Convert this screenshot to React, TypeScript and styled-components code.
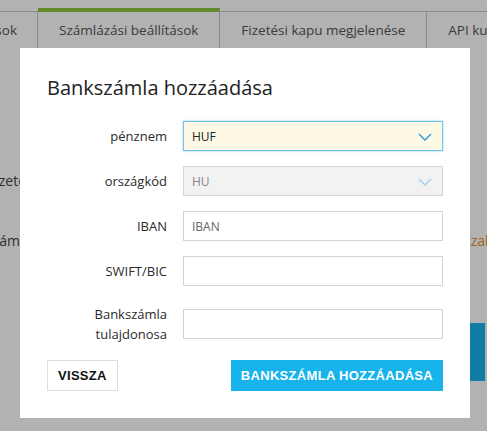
import React from "react";
import styled, { createGlobalStyle } from "styled-components";

const GlobalStyle = createGlobalStyle`
  html, body {
    margin: 0;
    padding: 0;
    background: #ffffff;
    overflow: hidden;
  }
  body {
    font-family: "Open Sans", "Liberation Sans", sans-serif;
    width: 487px;
    height: 431px;
  }
`;

const Page = styled.div`
  position: relative;
  width: 487px;
  height: 431px;
  overflow: hidden;
  padding-top: 8px;
  box-sizing: border-box;
`;

const TabStrip = styled.div`
  display: flex;
  align-items: flex-end;
  height: 40px;
  white-space: nowrap;
`;

const Tab = styled.div<{ $active?: boolean; $clipped?: boolean }>`
  display: flex;
  align-items: center;
  justify-content: ${({ $clipped }) => ($clipped ? "flex-end" : "center")};
  flex: 0 0 auto;
  box-sizing: border-box;
  height: ${({ $active }) => ($active ? "40px" : "37px")};
  padding: 0 21px;
  border-top: ${({ $active }) => ($active ? "4px solid #8dc63f" : "1px solid #c8c8c8")};
  border-right: 1px solid #c8c8c8;
  font-size: 13.5px;
  color: #555555;
  overflow: hidden;
  ${({ $clipped }) => ($clipped ? "width: 38px; padding: 0 20px 0 0;" : "")}
`;

const Content = styled.div`
  display: flex;
  flex-direction: column;
  padding-top: 122px;
  padding-right: 2px;
  font-size: 14px;
  color: #444444;
`;

const BgRow = styled.div`
  display: flex;
  align-items: center;
  height: 20px;
  margin-bottom: 40px;
  white-space: nowrap;
`;

const BgLabel = styled.span<{ $shift: number }>`
  flex: 1;
  margin-left: ${({ $shift }) => -$shift}px;
`;

const BgLink = styled.span`
  width: 21px;
  min-width: 21px;
  flex-shrink: 0;
  color: #e8922f;
  overflow: visible;
`;

const BgActions = styled.div`
  display: flex;
  justify-content: flex-end;
  margin-top: 33px;
`;

const BgButton = styled.div`
  width: 200px;
  height: 58px;
  background: #17b4ec;
`;

const Overlay = styled.div`
  position: absolute;
  inset: 0;
  background: rgba(0, 0, 0, 0.3);
  padding: 48px 0 0 20px;
`;

const Modal = styled.div`
  width: 450px;
  box-sizing: border-box;
  background: #ffffff;
  padding: 26px 27px 27px 27px;
  display: flex;
  flex-direction: column;
`;

const Title = styled.h2`
  margin: 0 0 19px 0;
  font-size: 20px;
  line-height: 28px;
  font-weight: 400;
  color: #222222;
`;

const Form = styled.div`
  display: flex;
  flex-direction: column;
  gap: 15px;
`;

const Row = styled.div`
  display: grid;
  grid-template-columns: 120px 260px;
  column-gap: 16px;
  align-items: center;
`;

const Label = styled.label<{ $multiline?: boolean }>`
  text-align: right;
  font-size: 13px;
  line-height: 20px;
  color: #2b2b2b;
  padding: ${({ $multiline }) => ($multiline ? "3px 0" : "0")};
`;

const SelectBox = styled.div<{ $focused?: boolean; $disabled?: boolean }>`
  position: relative;
  height: 30px;
  box-sizing: border-box;
  display: flex;
  align-items: center;
  padding: 0 8px;
  font-size: 12px;
  border: 1px solid ${({ $focused }) => ($focused ? "#73c4ee" : "#d6d6d6")};
  box-shadow: ${({ $focused }) => ($focused ? "0 0 2px rgba(115, 196, 238, 0.8)" : "none")};
  background: ${({ $focused, $disabled }) =>
    $focused ? "#fdf9e4" : $disabled ? "#f2f2f2" : "#ffffff"};
  color: ${({ $disabled }) => ($disabled ? "#888888" : "#222222")};
`;

const Chevron = styled.svg`
  position: absolute;
  right: 10px;
  top: 11px;
`;

const TextInput = styled.input`
  height: 30px;
  box-sizing: border-box;
  width: 100%;
  border: 1px solid #d3d3d3;
  padding: 0 8px;
  font-family: "Open Sans", "Liberation Sans", sans-serif;
  font-size: 12px;
  color: #222222;
  outline: none;
  &::placeholder {
    color: #666666;
  }
`;

const Footer = styled.div`
  display: flex;
  justify-content: space-between;
  margin-top: 13px;
`;

const Button = styled.button<{ $primary?: boolean }>`
  height: 31px;
  box-sizing: border-box;
  padding: 0 10px;
  font-family: "Liberation Sans", Arial, sans-serif;
  font-weight: 700;
  font-size: 13px;
  letter-spacing: 0.3px;
  text-transform: uppercase;
  cursor: pointer;
  border: ${({ $primary }) => ($primary ? "none" : "1px solid #dddddd")};
  background: ${({ $primary }) => ($primary ? "#17b4ec" : "#ffffff")};
  color: ${({ $primary }) => ($primary ? "#ffffff" : "#111111")};
`;

function Select({ value, focused, disabled }: { value: string; focused?: boolean; disabled?: boolean }) {
  return (
    <SelectBox $focused={focused} $disabled={disabled}>
      {value}
      <Chevron width="14" height="8" viewBox="0 0 14 8">
        <polyline
          points="1,1 7,7 13,1"
          fill="none"
          stroke={disabled ? "#9ad5f2" : "#2aa6e0"}
          strokeWidth="1.5"
        />
      </Chevron>
    </SelectBox>
  );
}

export default function App() {
  return (
    <>
      <GlobalStyle />
      <Page>
        <TabStrip>
          <Tab $clipped>Általános beállítások</Tab>
          <Tab $active>Számlázási beállítások</Tab>
          <Tab>Fizetési kapu megjelenése</Tab>
          <Tab>API kulcsok</Tab>
        </TabStrip>

        <Content>
          <BgRow>
            <BgLabel $shift={12}>Fizetési határidő</BgLabel>
          </BgRow>
          <BgRow>
            <BgLabel $shift={15}>Számla nyelve</BgLabel>
            <BgLink>szabályok</BgLink>
          </BgRow>
          <BgActions>
            <BgButton />
          </BgActions>
        </Content>

        <Overlay>
          <Modal>
            <Title>Bankszámla hozzáadása</Title>
            <Form>
              <Row>
                <Label>pénznem</Label>
                <Select value="HUF" focused />
              </Row>
              <Row>
                <Label>országkód</Label>
                <Select value="HU" disabled />
              </Row>
              <Row>
                <Label>IBAN</Label>
                <TextInput placeholder="IBAN" />
              </Row>
              <Row>
                <Label>SWIFT/BIC</Label>
                <TextInput />
              </Row>
              <Row>
                <Label $multiline>
                  Bankszámla
                  <br />
                  tulajdonosa
                </Label>
                <TextInput />
              </Row>
            </Form>
            <Footer>
              <Button>Vissza</Button>
              <Button $primary>Bankszámla hozzáadása</Button>
            </Footer>
          </Modal>
        </Overlay>
      </Page>
    </>
  );
}
